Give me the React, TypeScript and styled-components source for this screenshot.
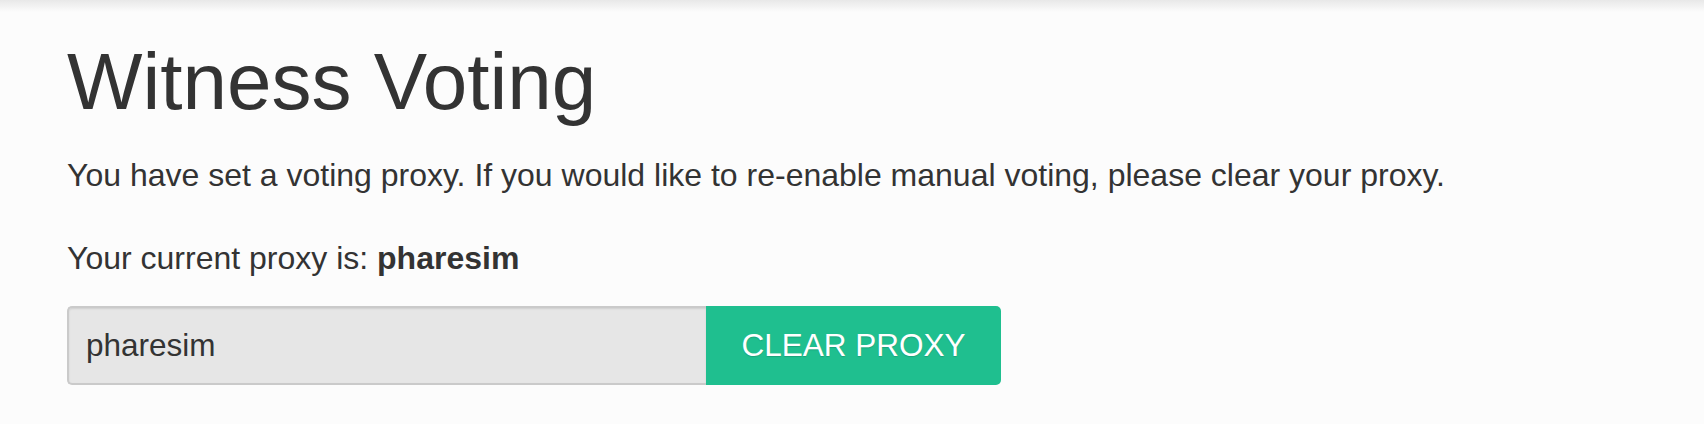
import React from 'react'
import styled, { createGlobalStyle } from 'styled-components'

const GlobalStyle = createGlobalStyle`
    html, body {
        margin: 0;
        padding: 0;
        background: #fcfcfc;
    }

    body {
        font-family: "Liberation Sans", Arial, Helvetica, sans-serif;
        color: #333;
    }
`

const TopShade = styled.div`
    height: 12px;
    background: linear-gradient(to bottom, #e8e8e8, #fcfcfc);
`

const Section = styled.section`
    padding: 22px 67px 0;
`

const Title = styled.h1`
    margin: 0;
    font-size: 80px;
    font-weight: 400;
    line-height: 96px;
    color: #333;
`

const Text = styled.p<{ $gap: number }>`
    margin: ${p => p.$gap}px 0 0;
    font-size: 32px;
    line-height: 42px;
    color: #333;

    b {
        font-weight: 700;
    }
`

const ProxyForm = styled.form`
    display: flex;
    margin-top: 27px;
    width: 934px;
    height: 79px;
`

const ProxyInput = styled.input`
    flex: 1;
    box-sizing: border-box;
    height: 100%;
    margin: 0;
    padding: 0 17px;
    border: 2px solid #cacaca;
    border-right: none;
    border-radius: 5px 0 0 5px;
    background: #e6e6e6;
    box-shadow: inset 0 1px 2px rgba(10, 10, 10, 0.1);
    font-family: inherit;
    font-size: 31.5px;
    color: #333;
    outline: none;
`

const ClearButton = styled.button`
    flex: 0 0 295px;
    height: 100%;
    margin: 0;
    border: none;
    border-radius: 0 5px 5px 0;
    background: #1fbf8f;
    color: #fff;
    font-family: inherit;
    font-size: 31.5px;
    text-transform: uppercase;
    text-shadow: 0 1px 1px rgba(0, 0, 0, 0.15);
    cursor: pointer;
`

const WitnessVoting: React.FC = () => {
    const proxy = 'pharesim'

    return (
        <Section>
            <Title>Witness Voting</Title>
            <Text $gap={24}>
                You have set a voting proxy. If you would like to re-enable manual voting, please clear your proxy.
            </Text>
            <Text $gap={41}>
                Your current proxy is: <b>{proxy}</b>
            </Text>
            <ProxyForm onSubmit={e => e.preventDefault()}>
                <ProxyInput type='text' value={proxy} disabled readOnly />
                <ClearButton type='submit'>Clear proxy</ClearButton>
            </ProxyForm>
        </Section>
    )
}

const App: React.FC = () => {
    return (
        <>
            <GlobalStyle />
            <TopShade />
            <WitnessVoting />
        </>
    )
}

export default App
